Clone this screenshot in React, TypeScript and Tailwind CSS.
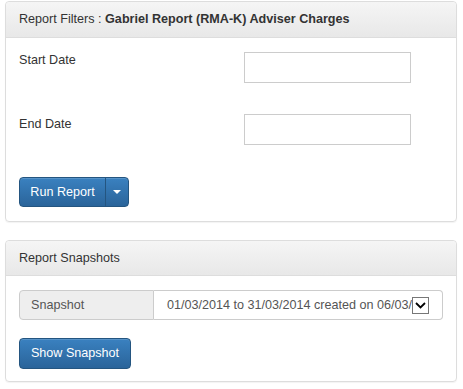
export default function App() {
  return (
    <div
      className="w-[463px] h-[389px] bg-white pl-[5px] pt-[1px] text-[#333] text-[12.6px]"
      style={{ fontFamily: '"Liberation Sans", Arial, sans-serif' }}
    >
      {/* Report filters panel */}
      <div className="w-[452px] rounded-[4px] border border-[#ddd] shadow-[0_1px_1px_rgba(0,0,0,0.05)]">
        <div className="h-[36px] flex items-center px-[13px] border-b border-[#ddd] rounded-t-[4px] bg-gradient-to-b from-[#f5f5f5] to-[#e8e8e8]">
          <span>Report Filters :&nbsp;</span>
          <span className="font-bold">Gabriel Report (RMA-K) Adviser Charges</span>
        </div>
        <div className="px-[13px] pt-[14px] pb-[14px]">
          <div className="flex">
            <div className="w-[225px] pt-[1px] leading-[15px]">Start Date</div>
            <div className="w-[167px] h-[31px] border border-[#ccc] bg-white" />
          </div>
          <div className="flex mt-[31px]">
            <div className="w-[225px] pt-[3px] leading-[15px]">End Date</div>
            <div className="w-[167px] h-[31px] border border-[#ccc] bg-white" />
          </div>
          <div className="mt-[32px] flex w-[110px] h-[30px] rounded-[4px] border border-[#245580] bg-gradient-to-b from-[#3a81c0] to-[#2a649a] text-white shadow-[inset_0_1px_0_rgba(255,255,255,0.15)]">
            <div className="w-[86px] flex items-center justify-center border-r border-[#245580]">Run Report</div>
            <div className="flex-1 flex items-center justify-center">
              <div className="w-0 h-0 border-l-[4px] border-r-[4px] border-t-[4px] border-l-transparent border-r-transparent border-t-white" />
            </div>
          </div>
        </div>
      </div>

      {/* Report snapshots panel */}
      <div className="mt-[18px] w-[452px] rounded-[4px] border border-[#ddd] shadow-[0_1px_1px_rgba(0,0,0,0.05)]">
        <div className="h-[35px] flex items-center px-[13px] border-b border-[#ddd] rounded-t-[4px] bg-gradient-to-b from-[#f5f5f5] to-[#e8e8e8]">
          Report Snapshots
        </div>
        <div className="px-[13px] pt-[14px] pb-[12px]">
          <div className="flex w-[424px] h-[30px]">
            <div className="w-[135px] flex items-center pl-[11px] bg-[#eee] border border-[#ccc] rounded-l-[4px] text-[#555]">
              Snapshot
            </div>
            <div className="flex-1 flex items-center pl-[13px] pr-[11px] border border-l-0 border-[#ccc] rounded-r-[4px] bg-white text-[#555]">
              <span className="w-[246px] whitespace-nowrap">01/03/2014 to 31/03/2014 created on 06/03/</span>
              <div className="ml-[-1px] w-[17px] h-[17px] shrink-0 border border-[#777] bg-white flex items-center justify-center">
                <svg width="11" height="7" viewBox="0 0 11 7">
                  <path d="M1 1 L5.5 5.5 L10 1" stroke="#000" strokeWidth="1.8" fill="none" />
                </svg>
              </div>
            </div>
          </div>
          <div className="mt-[18px] w-[112px] h-[31px] flex items-center justify-center rounded-[4px] border border-[#245580] bg-gradient-to-b from-[#3a81c0] to-[#2a649a] text-white shadow-[inset_0_1px_0_rgba(255,255,255,0.15)]">
            Show Snapshot
          </div>
        </div>
      </div>
    </div>
  );
}
